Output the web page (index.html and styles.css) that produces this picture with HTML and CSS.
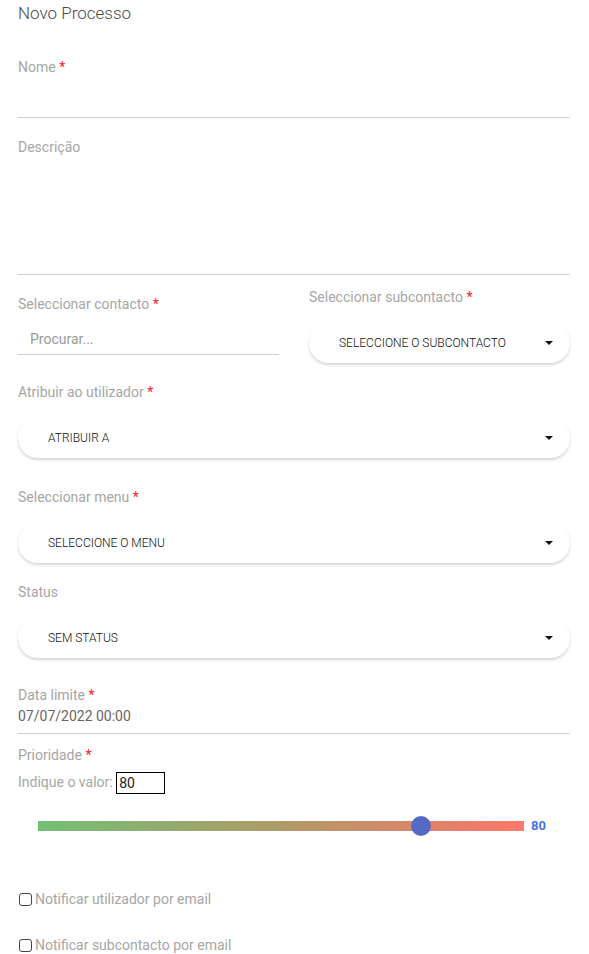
FILE: index.html
```html
<!DOCTYPE html>
<html lang="pt">

<head>
  <meta charset="UTF-8" />
  <meta name="viewport" content="width=device-width, initial-scale=1.0" />
  <title>Novo Processo</title>
  <link rel="stylesheet" href="styles.css">
</head>

<body>
  <div class="page">
    <h1 class="title">Novo Processo</h1>

    <!-- Nome -->
    <div class="field field-name">
      <label class="label">Nome <span class="req">*</span></label>
      <div class="line-input"></div>
    </div>

    <!-- Descrição -->
    <div class="field field-desc">
      <label class="label">Descrição</label>
      <div class="line-input area"></div>
    </div>

    <!-- Contacto / subcontacto -->
    <div class="two-cols">
      <div class="col col-left">
        <label class="label">Seleccionar contacto <span class="req">*</span></label>
        <div class="search-input">Procurar...</div>
      </div>
      <div class="col col-right">
        <label class="label">Seleccionar subcontacto <span class="req">*</span></label>
        <div class="pill-select">SELECCIONE O SUBCONTACTO<span class="caret"></span></div>
      </div>
    </div>

    <div class="field field-user">
      <label class="label">Atribuir ao utilizador <span class="req">*</span></label>
      <div class="pill-select">ATRIBUIR A<span class="caret"></span></div>
    </div>

    <div class="field field-menu">
      <label class="label">Seleccionar menu <span class="req">*</span></label>
      <div class="pill-select">SELECCIONE O MENU<span class="caret"></span></div>
    </div>

    <div class="field field-status">
      <label class="label">Status</label>
      <div class="pill-select">SEM STATUS<span class="caret"></span></div>
    </div>

    <!-- Data limite -->
    <div class="field field-date">
      <label class="label">Data limite <span class="req">*</span></label>
      <div class="date-value">07/07/2022 00:00</div>
    </div>

    <!-- Prioridade -->
    <div class="field field-prio">
      <label class="label">Prioridade <span class="req">*</span></label>
      <div class="prio-input">Indique o valor: <span class="num-box">80</span></div>
      <div class="slider-row">
        <div class="track">
          <span class="thumb" style="left: 78.8%"></span>
        </div>
        <span class="slider-value">80</span>
      </div>
    </div>

    <!-- Notificações -->
    <label class="check check-first"><span class="box"></span>Notificar utilizador por email</label>
    <label class="check"><span class="box"></span>Notificar subcontacto por email</label>
  </div>
</body>

</html>
```

FILE: styles.css
```css
body {
  margin: 0;
  font-family: Roboto, "Liberation Sans", sans-serif;
  background: #fff;
}

.page {
  width: 552px;
  padding: 0 19px 0 18px;
}

.title {
  margin: 0;
  font-size: 17px;
  font-weight: 300;
  line-height: 26px;
  color: #4a4a4a;
}

.label {
  display: block;
  font-size: 14px;
  line-height: 20px;
  color: #a6a6a6;
}

.req {
  color: #f22;
}

.field-name {
  margin-top: 31px;
}

.line-input {
  height: 40px;
  border-bottom: 1px solid #d0d0d0;
}

.field-desc {
  margin-top: 19px;
}

.line-input.area {
  height: 117px;
}

/* two column row */
.two-cols {
  display: grid;
  grid-template-columns: 261px 261px;
  column-gap: 30px;
}

.col-left {
  padding-top: 19px;
}

.col-right {
  padding-top: 12px;
}

.search-input {
  height: 41px;
  box-sizing: border-box;
  padding: 15px 0 0 12px;
  font-size: 14px;
  line-height: 20px;
  color: #9a9a9a;
  border-bottom: 1px solid #d0d0d0;
}

.pill-select {
  position: relative;
  height: 40px;
  margin-top: 16px;
  padding-left: 30px;
  border-radius: 20px;
  background: #fff;
  box-shadow: 0 2px 3px rgba(0, 0, 0, 0.16), 0 0 1px rgba(0, 0, 0, 0.04);
  font-size: 12px;
  font-weight: 300;
  line-height: 40px;
  color: #111;
}

.caret {
  position: absolute;
  right: 17px;
  top: 18px;
  border-left: 4px solid transparent;
  border-right: 4px solid transparent;
  border-top: 4px solid #111;
}

.field-user {
  margin-top: 19px;
}

.field-menu {
  margin-top: 29px;
}

.field-status {
  margin-top: 19px;
}

.field-date {
  margin-top: 27px;
}

.date-value {
  font-size: 14px;
  line-height: 22px;
  color: #666;
  padding-bottom: 6px;
  border-bottom: 1px solid #d0d0d0;
}

.field-prio {
  margin-top: 11px;
}

.prio-input {
  margin-top: 6px;
  font-size: 14px;
  line-height: 22px;
  color: #a6a6a6;
}

.num-box {
  display: inline-block;
  width: 45px;
  height: 20px;
  padding-left: 2px;
  border: 1px solid #000;
  color: #222;
  line-height: 20px;
  vertical-align: middle;
}

.slider-row {
  display: flex;
  align-items: center;
  margin-top: 24px;
  padding-left: 20px;
}

.track {
  position: relative;
  width: 486px;
  height: 10px;
  background: linear-gradient(to right, #72bf72, #b09a6a 50%, #fc776a);
}

.thumb {
  position: absolute;
  top: -5px;
  width: 20px;
  height: 20px;
  margin-left: -10px;
  border-radius: 50%;
  background: #556ac4;
}

.slider-value {
  margin-left: 7px;
  font-size: 13px;
  font-weight: bold;
  color: #4a72e8;
}

.check {
  display: flex;
  align-items: center;
  font-size: 14px;
  line-height: 20px;
  color: #a6a6a6;
  margin-top: 26px;
}

.check-first {
  margin-top: 56px;
}

.box {
  width: 11px;
  height: 11px;
  border: 1px solid #444;
  border-radius: 3px;
  margin-right: 3px;
  margin-left: 1px;
}
```
